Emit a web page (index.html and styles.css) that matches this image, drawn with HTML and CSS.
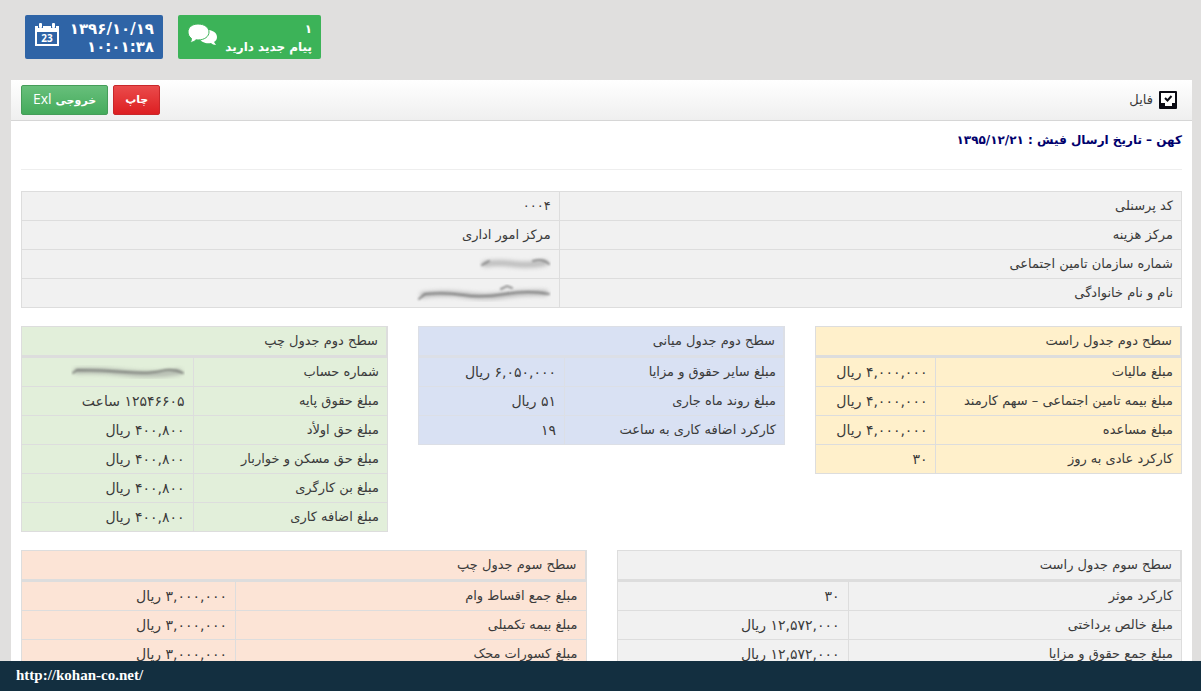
FILE: index.html
```html
<!DOCTYPE html>
<html lang="fa" dir="rtl">
<head>
<meta charset="utf-8">
<title>فیش حقوقی</title>
<link rel="stylesheet" href="styles.css">
</head>
<body>
<main class="page">
  <header class="tiles">
    <a class="tile tile-green" href="#">
      <span class="tile-text"><span>۱</span><span>پیام جدید دارید</span></span>
      <svg class="tile-icon" width="29" height="24" viewBox="0 0 29 24" aria-hidden="true">
        <path fill="#fff" d="M15 7c8-1 14 2 14 7 0 2-1 4-3 5l2 3c-2 0-4-1-5-2-5 1-10-1-11-4z"/>
        <path fill="#fff" stroke="#3cb358" stroke-width="1" d="M10 1c6.500 0 11 3.500 11 8s-4.500 8-11 8l-2-.2C6.500 18.500 4 19.500 2 19.500c1-1 1.500-2.500 1.500-4C1.300 14 0 11.700 0 9 0 4.500 4 1 10 1z"/>
      </svg>
    </a>
    <div class="tile tile-blue">
      <span class="tile-text clock"><span>۱۳۹۶/۱۰/۱۹</span><span>۱۰:۰۱:۳۸</span></span>
      <svg class="tile-icon" width="24" height="24" viewBox="0 0 24 24" aria-hidden="true">
        <path fill="#fff" d="M0 3h24v20H0z"/>
        <path fill="#2f64a6" d="M2 9h20v12H2zM3 3h5v2H3zM16 3h5v2h-5z"/>
        <rect x="4" width="3" height="5" rx="1" fill="#fff"/><rect x="17" width="3" height="5" rx="1" fill="#fff"/>
        <text class="day" x="12" y="19" text-anchor="middle">23</text>
      </svg>
    </div>
  </header>

  <section class="panel">
    <div class="toolbar">
      <h1 class="toolbar-title">
        <svg width="18" height="18" viewBox="0 0 18 18" aria-hidden="true">
          <rect width="18" height="18" rx="1" fill="#0b0b14"/>
          <path fill="#fff" d="M2 2h14v10h-3v3H6v-3H2z"/>
          <path fill="none" stroke="#0b0b14" stroke-width="2" d="M6 7l2.500 2.500L12.500 5"/>
        </svg>
        <span>فایل</span>
      </h1>
      <div class="actions">
        <button type="button" class="btn btn-red">چاپ</button>
        <button type="button" class="btn btn-green">خروجی <span class="latin">Exl</span></button>
      </div>
    </div>

    <div class="content">
      <h2 class="heading">کهن – تاریخ ارسال فیش : ۱۳۹۵/۱۲/۲۱</h2>

      <table class="sheet info gray">
        <tbody>
          <tr><th scope="row">کد پرسنلی</th><td>۰۰۰۴</td></tr>
          <tr><th scope="row">مرکز هزینه</th><td>مرکز امور اداری</td></tr>
          <tr><th scope="row">شماره سازمان تامین اجتماعی</th><td>
            <svg class="smudge" width="72" height="16" viewBox="0 0 72 16" aria-hidden="true">
              <path class="soft" stroke-width="6" d="M6 8Q20 6 34 8T66 7"/>
              <path class="line" stroke-width="2" d="M3 9L10 5M54 5Q64 2 70 8"/>
            </svg></td></tr>
          <tr><th scope="row">نام و نام خانوادگی</th><td>
            <svg class="smudge" width="136" height="18" viewBox="0 0 136 18" aria-hidden="true">
              <path class="soft" stroke-width="6" d="M8 11Q30 8 50 11T90 11T130 9"/>
              <path class="line" stroke-width="2" d="M4 15L10 10Q30 8 48 11T90 10T134 10M86 5L92 2L97 4"/>
            </svg></td></tr>
        </tbody>
      </table>

      <div class="row thirds">
        <table class="sheet yellow">
          <thead><tr><th colspan="2">سطح دوم جدول راست</th></tr></thead>
          <tbody>
            <tr><th scope="row">مبلغ مالیات</th><td>۴,۰۰۰,۰۰۰ ریال</td></tr>
            <tr><th scope="row">مبلغ بیمه تامین اجتماعی – سهم کارمند</th><td>۴,۰۰۰,۰۰۰ ریال</td></tr>
            <tr><th scope="row">مبلغ مساعده</th><td>۴,۰۰۰,۰۰۰ ریال</td></tr>
            <tr><th scope="row">کارکرد عادی به روز</th><td>۳۰</td></tr>
          </tbody>
        </table>
        <table class="sheet blue">
          <thead><tr><th colspan="2">سطح دوم جدول میانی</th></tr></thead>
          <tbody>
            <tr><th scope="row">مبلغ سایر حقوق و مزایا</th><td>۶,۰۵۰,۰۰۰ ریال</td></tr>
            <tr><th scope="row">مبلغ روند ماه جاری</th><td>۵۱ ریال</td></tr>
            <tr><th scope="row">کارکرد اضافه کاری به ساعت</th><td>۱۹</td></tr>
          </tbody>
        </table>
        <table class="sheet green">
          <thead><tr><th colspan="2">سطح دوم جدول چپ</th></tr></thead>
          <tbody>
            <tr><th scope="row">شماره حساب</th><td>
              <svg class="smudge" width="114" height="14" viewBox="0 0 114 14" aria-hidden="true">
                <path class="soft" stroke-width="6" d="M6 6Q30 5 56 8T108 7"/>
                <path class="line" stroke-width="2" d="M2 8L6 5Q30 5 54 7T90 6T112 8"/>
              </svg></td></tr>
            <tr><th scope="row">مبلغ حقوق پایه</th><td>۱۲۵۴۶۶۰۵ ساعت</td></tr>
            <tr><th scope="row">مبلغ حق اولأد</th><td>۴۰۰,۸۰۰ ریال</td></tr>
            <tr><th scope="row">مبلغ حق مسکن و خواربار</th><td>۴۰۰,۸۰۰ ریال</td></tr>
            <tr><th scope="row">مبلغ بن کارگری</th><td>۴۰۰,۸۰۰ ریال</td></tr>
            <tr><th scope="row">مبلغ اضافه کاری</th><td>۴۰۰,۸۰۰ ریال</td></tr>
          </tbody>
        </table>
      </div>

      <div class="row halves">
        <table class="sheet gray">
          <thead><tr><th colspan="2">سطح سوم جدول راست</th></tr></thead>
          <tbody>
            <tr><th scope="row">کارکرد موثر</th><td>۳۰</td></tr>
            <tr><th scope="row">مبلغ خالص پرداختی</th><td>۱۲,۵۷۲,۰۰۰ ریال</td></tr>
            <tr><th scope="row">مبلغ جمع حقوق و مزایا</th><td>۱۲,۵۷۲,۰۰۰ ریال</td></tr>
          </tbody>
        </table>
        <table class="sheet peach">
          <thead><tr><th colspan="2">سطح سوم جدول چپ</th></tr></thead>
          <tbody>
            <tr><th scope="row">مبلغ جمع اقساط وام</th><td>۳,۰۰۰,۰۰۰ ریال</td></tr>
            <tr><th scope="row">مبلغ بیمه تکمیلی</th><td>۳,۰۰۰,۰۰۰ ریال</td></tr>
            <tr><th scope="row">مبلغ کسورات محک</th><td>۳,۰۰۰,۰۰۰ ریال</td></tr>
          </tbody>
        </table>
      </div>
    </div>
  </section>
</main>
<footer class="footer" dir="ltr"><a href="http://kohan-co.net/">http://kohan-co.net/</a></footer>
</body>
</html>
```
FILE: styles.css
```css
* { box-sizing: border-box; }
body {
  margin: 0;
  height: 100vh;
  display: flex;
  flex-direction: column;
  background: #e0dfde;
  color: #3a3a3a;
  font: 13px/20px "DejaVu Sans", sans-serif;
}
.page {
  flex: 1;
  min-height: 0;
  overflow-y: auto;
  scrollbar-width: none;
  padding: 15px 9px 0 11px;
}
.tiles {
  display: flex;
  justify-content: flex-end;
  gap: 15px;
  padding-left: 14px;
  margin-bottom: 21px;
}
.tile {
  display: flex;
  justify-content: space-between;
  min-height: 44px;
  padding: 5px 9px 3px 10px;
  border-radius: 2px;
  color: #fff;
  font-size: 12px;
  font-weight: bold;
  line-height: 18px;
  text-decoration: none;
}
.tile-green { background: #3cb358; min-width: 143px; }
.tile-blue { background: #2f64a6; min-width: 138px; }
.tile-text { display: flex; flex-direction: column; }
.clock { font-size: 15px; }
.tile-icon { margin-top: 3px; flex: none; }
.day { font: bold 10px "Open Sans", sans-serif; fill: #fff; }

.panel { background: #fff; border-radius: 2px 2px 0 0; }
.toolbar {
  display: flex;
  justify-content: space-between;
  align-items: center;
  height: 41px;
  padding: 0 15px 0 10px;
  border-bottom: 1px solid #d6d6d6;
  background: linear-gradient(#fff, #efefef);
}
.toolbar-title {
  display: flex;
  align-items: center;
  gap: 6px;
  margin: 0;
  font-size: 13px;
  font-weight: normal;
}
.actions { display: flex; gap: 5px; }
.btn {
  height: 30px;
  padding: 0 11px;
  border: 1px solid;
  border-radius: 2px;
  color: #fff;
  font: bold 11px/20px "DejaVu Sans", sans-serif;
}
.btn-red { background: linear-gradient(#ea4b4b, #dd1f22); border-color: #c8272a; }
.btn-green { background: linear-gradient(#67bf7b, #45ab5c); border-color: #459d59; }
.latin { font: 14px "Open Sans", sans-serif; }

.content { padding: 0 10px 30px; }
.heading {
  margin: 0 0 21px;
  padding: 9px 0 19px;
  border-bottom: 1px solid #eee;
  color: #00006c;
  font-size: 12px;
  font-weight: bold;
  line-height: 20px;
}
.sheet {
  width: 100%;
  border: 1px solid #ddd;
  border-bottom: 0;
  border-spacing: 0;
}
.sheet th, .sheet td {
  height: 29px;
  padding: 0 8px;
  border-bottom: 1px solid #ddd;
  font-weight: normal;
  text-align: right;
  white-space: nowrap;
}
.sheet td { border-right: 1px solid #ddd; }
.sheet thead th { height: 31px; border-bottom-width: 3px; border-right: 1px solid #ddd; }
.smudge { display: block; }
.soft, .line { fill: none; stroke-linecap: round; }
.soft { stroke: #888; opacity: .5; filter: blur(2px); }
.line { stroke: #555; opacity: .6; filter: blur(1px); }

.row { display: grid; gap: 30px; margin-top: 18px; align-items: start; }
.thirds { grid-template-columns: repeat(3, 1fr); }
.halves { grid-template-columns: repeat(2, 1fr); }
.row td { font-size: 14px; }
.gray { background: #f1f1f1; }
.yellow { background: #fff0cb; }
.blue { background: #d9e1f3; }
.green { background: #e2efda; }
.peach { background: #fce4d6; }
.blue, .blue thead th, .blue tbody th, .blue tbody td { border-color: #dcdfe6; }
.yellow td { width: 33%; }
.blue td { width: 40%; }
.green td { width: 47%; }
.gray td { width: 41%; }
.peach td { width: 38%; }
.info td { width: 46.4%; }

.footer {
  flex: none;
  height: 30px;
  padding: 4px 16px;
  background: #132f40;
  font: bold 15px/20px "Liberation Serif", serif;
}
.footer a { color: #fff; text-decoration: none; }
```
